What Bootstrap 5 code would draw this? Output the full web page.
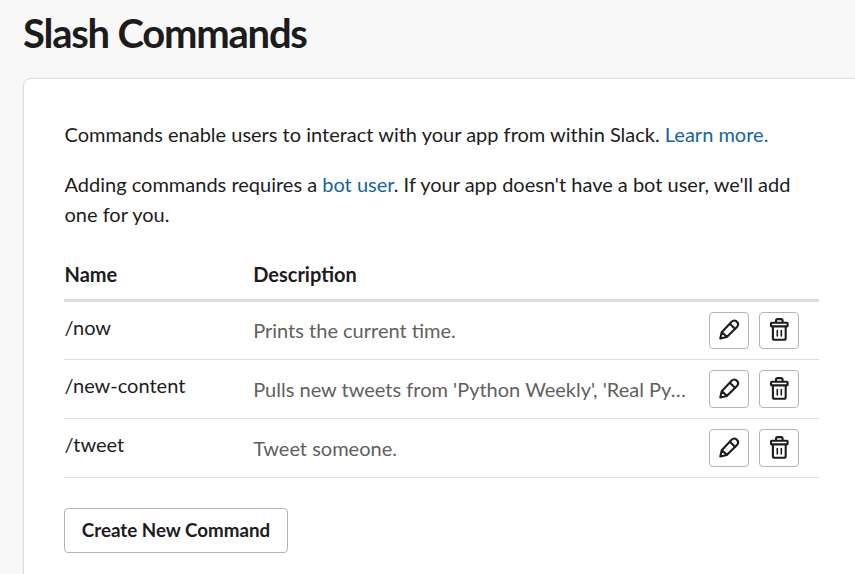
<!DOCTYPE html>
<html lang="en">
<head>
<meta charset="utf-8">
<title>Slash Commands</title>
<meta name="viewport" content="width=device-width, initial-scale=1">
<link href="https://cdn.jsdelivr.net/npm/bootstrap@5.3.0/dist/css/bootstrap.min.css" rel="stylesheet">
<style>
body{font-family:Lato,"Noto Sans",sans-serif;background:#f8f8f8;color:#1d1c1d;font-size:20px;line-height:30px;height:574px;overflow:hidden}
h1{font-size:40px;font-weight:700;line-height:48px;letter-spacing:-1.23px;margin:9px 0 21px 23px}
.panel{margin-left:23px;width:873px;height:520px;padding:40px 40px;border:1px solid #ddd;border-radius:8px;background:#fff;box-shadow:0 1px 3px rgba(0,0,0,.08)}
.panel p{margin:0 0 20px .5px;width:750px}
a{color:#1264a3;text-decoration:none}
.cmd{width:755px;border-bottom:1px solid #ddd;height:59px}
.cmd-first{height:58px}
.cmd-head{height:43px;margin-top:30px;border-bottom:3px solid #ddd;font-weight:700}
.c-name{width:189px;flex:none;padding:10px 0 0 .5px}
.c-desc{width:434px;flex:none;padding:14px 0 0 .2px;color:#616061}
.cmd-first .c-desc{padding-top:13px}
.cmd-head .c-name{padding-top:0}
.cmd-head .c-desc{padding-top:0;color:inherit}
.tools{gap:10px;padding:10px 0 0 22px}
.btn-slim{width:40px;height:38px;padding:6px 7px;border:1px solid #b5b5b5;border-radius:4px;background:#fff}
.cmd-first .btn-slim{height:37px;padding:5px 7px 6px}
.btn-slim svg{display:block;width:24px;height:24px;fill:none;stroke:#1d1c1d;stroke-width:2.1;stroke-linejoin:round;stroke-linecap:round}
.btn-new{width:224px;height:45px;padding:0;border:1px solid #b5b5b5;border-radius:4px;background:#fff;font-weight:700;font-size:18.75px;color:#1d1c1d;margin-top:30px}
</style>
</head>
<body>
<svg class="d-none"><defs>
<g id="pen"><path d="M3.300 20.500 L4.700 14.200 L14.600 3.700 Q16.800 1.700 19 3 L20.500 4.500 Q22 6.500 20.200 8.700 L9.800 19 Z M12.800 5.700 L18.200 11 M5 14.200 L9.800 18.800"/></g>
<g id="bin"><path d="M9 4.300 V2.700 Q9 1.100 10.600 1.100 H14 Q15.600 1.100 15.600 2.700 V4.300 M5.900 9 V20 Q5.900 21.800 7.700 21.800 H16.900 Q18.700 21.800 18.700 20 V9"/><rect x="4" y="4.700" width="16.600" height="3.700" rx=".7"/><path d="M10.300 12.500 V18 M14.300 12.500 V18" stroke-width="1.600"/></g>
</defs></svg>
<h1>Slash Commands</h1>
<main class="panel">
<p>Commands enable users to interact with your app from within Slack. <a href="#">Learn more.</a></p>
<p>Adding commands requires a <a href="#">bot user</a>. If your app doesn't have a bot user, we'll add one for you.</p>
<div class="cmd cmd-head d-flex"><div class="c-name">Name</div><div class="c-desc">Description</div></div>
<div class="cmd cmd-first d-flex"><div class="c-name">/now</div><div class="c-desc text-truncate">Prints the current time.</div>
<div class="tools d-flex align-items-start"><button class="btn btn-slim" aria-label="Edit"><svg viewBox="0 0 24 24"><use href="#pen"/></svg></button><button class="btn btn-slim" aria-label="Delete"><svg viewBox="0 0 24 24"><use href="#bin"/></svg></button></div></div>
<div class="cmd d-flex"><div class="c-name">/new-content</div><div class="c-desc text-truncate">Pulls new tweets from 'Python Weekly', 'Real Py…</div>
<div class="tools d-flex align-items-start"><button class="btn btn-slim" aria-label="Edit"><svg viewBox="0 0 24 24"><use href="#pen"/></svg></button><button class="btn btn-slim" aria-label="Delete"><svg viewBox="0 0 24 24"><use href="#bin"/></svg></button></div></div>
<div class="cmd d-flex"><div class="c-name">/tweet</div><div class="c-desc text-truncate">Tweet someone.</div>
<div class="tools d-flex align-items-start"><button class="btn btn-slim" aria-label="Edit"><svg viewBox="0 0 24 24"><use href="#pen"/></svg></button><button class="btn btn-slim" aria-label="Delete"><svg viewBox="0 0 24 24"><use href="#bin"/></svg></button></div></div>
<button class="btn btn-new">Create New Command</button>
</main>
<script src="https://cdn.jsdelivr.net/npm/bootstrap@5.3.0/dist/js/bootstrap.bundle.min.js"></script>
</body>
</html>
